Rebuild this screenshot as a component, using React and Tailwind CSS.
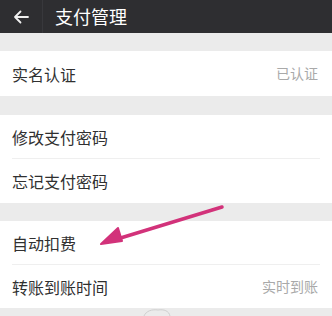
import React from "react";

const font = { fontFamily: '"Noto Sans CJK SC", "Noto Sans", sans-serif' };

function Row({ label, value, divider, h = "h-[44px]" }) {
  return (
    <div className={`relative flex ${h} items-center justify-between pl-3 pr-[14px]`}>
      <span className="text-[16px] text-[#303030]">{label}</span>
      {value && <span className="text-[14px] text-[#a9a9a9]">{value}</span>}
      {divider && <div className="absolute bottom-0 left-3 right-3 h-px bg-[#efefef]" />}
    </div>
  );
}

export default function App() {
  return (
    <div className="relative h-[316px] w-[332px] overflow-hidden bg-[#ebebeb]" style={font}>
      <div className="flex h-[33px] items-center bg-[#2e2e31]">
        <div className="flex h-full w-[43px] items-center justify-center border-r border-[#38383c]">
          <svg width="16" height="14" viewBox="0 0 16 14" fill="none" stroke="#f0f0f0" strokeWidth="1.8" strokeLinecap="round" strokeLinejoin="round">
            <path d="M15 7H2M7.5 1.5L2 7l5.5 5.5" />
          </svg>
        </div>
        <span className="ml-[12px] text-[18px] text-white">支付管理</span>
      </div>
      <div className="h-[18px]" />
      <div className="bg-white">
        <Row label="实名认证" value="已认证" h="h-[45px]" />
      </div>
      <div className="h-[19px]" />
      <div className="bg-white">
        <Row label="修改支付密码" divider />
        <Row label="忘记支付密码" />
      </div>
      <div className="h-[18px]" />
      <div className="bg-white">
        <Row label="自动扣费" divider />
        <Row label="转账到账时间" value="实时到账" h="h-[43px]" />
      </div>
      <svg className="absolute left-0 top-0" width="332" height="316" viewBox="0 0 332 316">
        <path d="M222 207 L114 240" stroke="#d2327a" strokeWidth="3.5" strokeLinecap="round" />
        <path d="M101 244 L118 228 L122 241 Z" fill="#d2327a" stroke="#d2327a" strokeWidth="2" strokeLinejoin="round" />
        <path d="M144 316 C146 311 152 309 158 310 C164 309 169 311 170 316" stroke="#cfcfcf" strokeWidth="1" fill="none" />
      </svg>
    </div>
  );
}
